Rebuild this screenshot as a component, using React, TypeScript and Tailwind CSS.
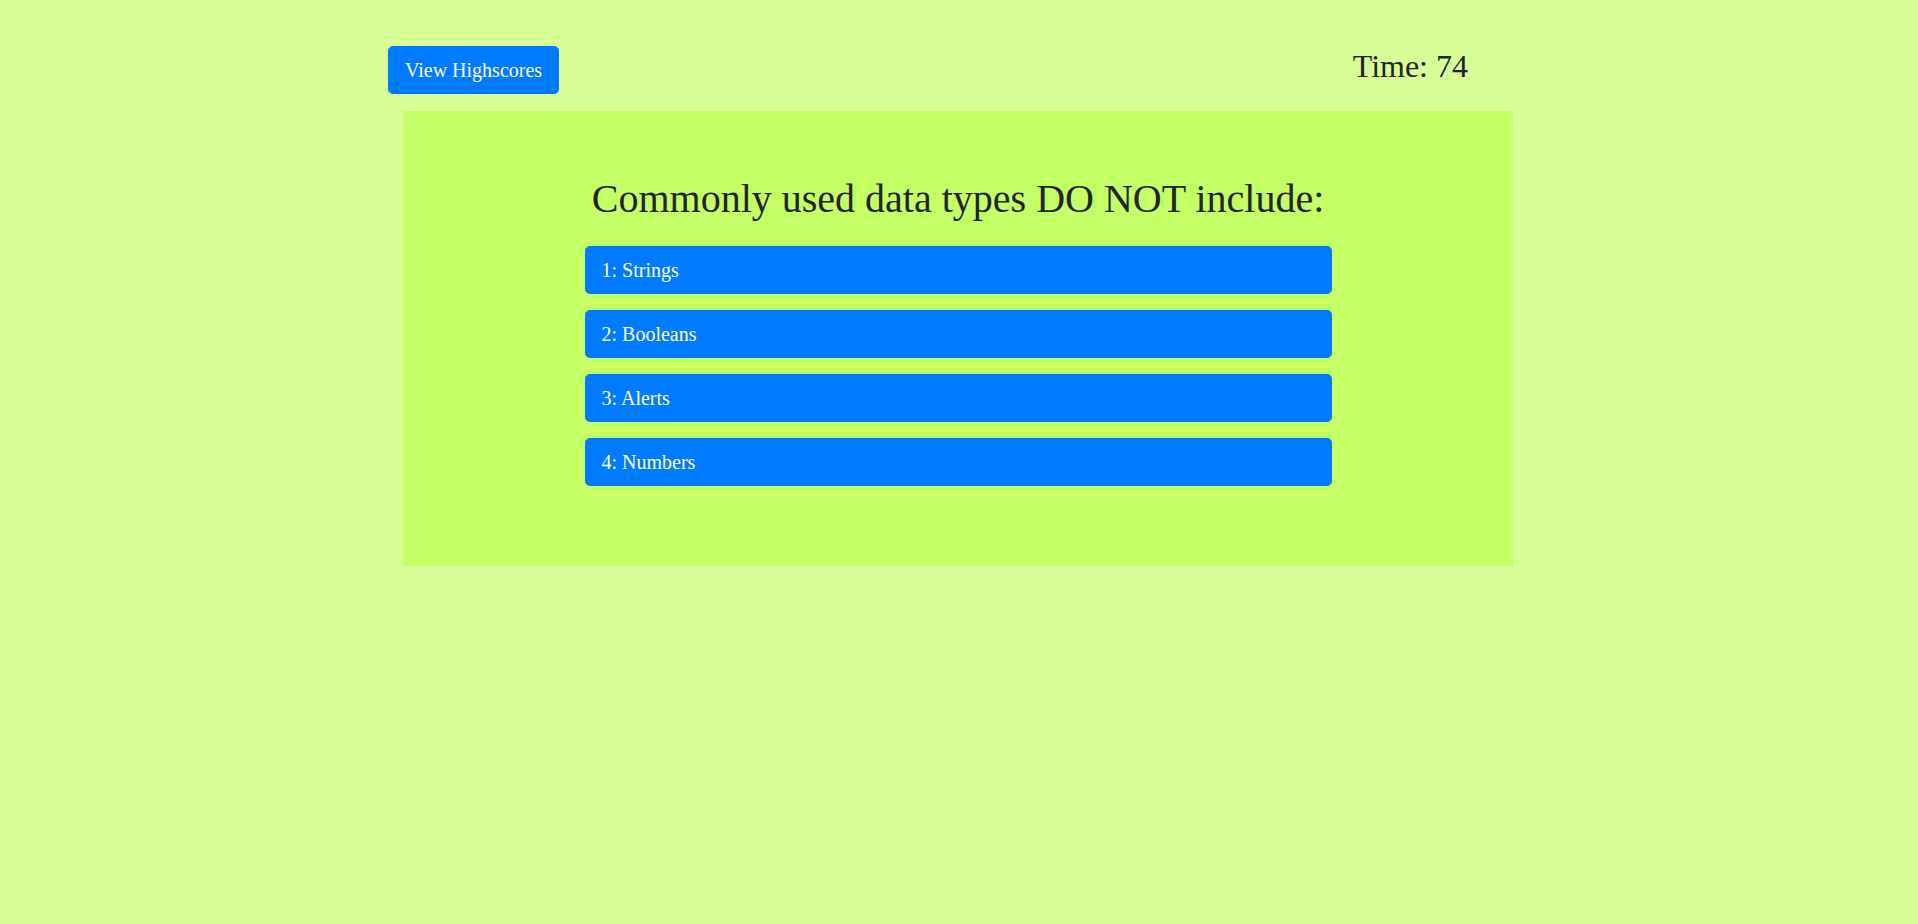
export default function App() {
  const choices = ["1: Strings", "2: Booleans", "3: Alerts", "4: Numbers"];

  return (
    <div className="min-h-[924px] bg-[#d8ff97] text-[#212529] font-['Liberation_Serif',serif]">
      <div className="w-[1140px] mx-auto">
        <div className="pt-[46px] pr-[61px] flex items-start justify-between">
          <button className="ml-[-1px] bg-[#007bff] text-white text-[20px] leading-[30px] px-4 py-2 border border-[#007bff] rounded-[4.8px]">
            View Highscores
          </button>
          <div className="mt-[1px] text-[32px] leading-[1.2]">Time: 74</div>
        </div>
        <div className="w-[1110px] ml-[14px] mt-[17px] bg-[#c5ff66] pt-[64px] pb-[80px]">
          <h1 className="text-center text-[40px] leading-[1.2] mb-[23px]">
            Commonly used data types DO NOT include:
          </h1>
          <div className="w-[747px] mx-auto flex flex-col gap-4">
            {choices.map((c) => (
              <button
                key={c}
                className="w-full text-left bg-[#007bff] text-white text-[20px] leading-[30px] px-4 py-2 border border-[#007bff] rounded-[4.8px]"
              >
                {c}
              </button>
            ))}
          </div>
        </div>
      </div>
    </div>
  );
}
